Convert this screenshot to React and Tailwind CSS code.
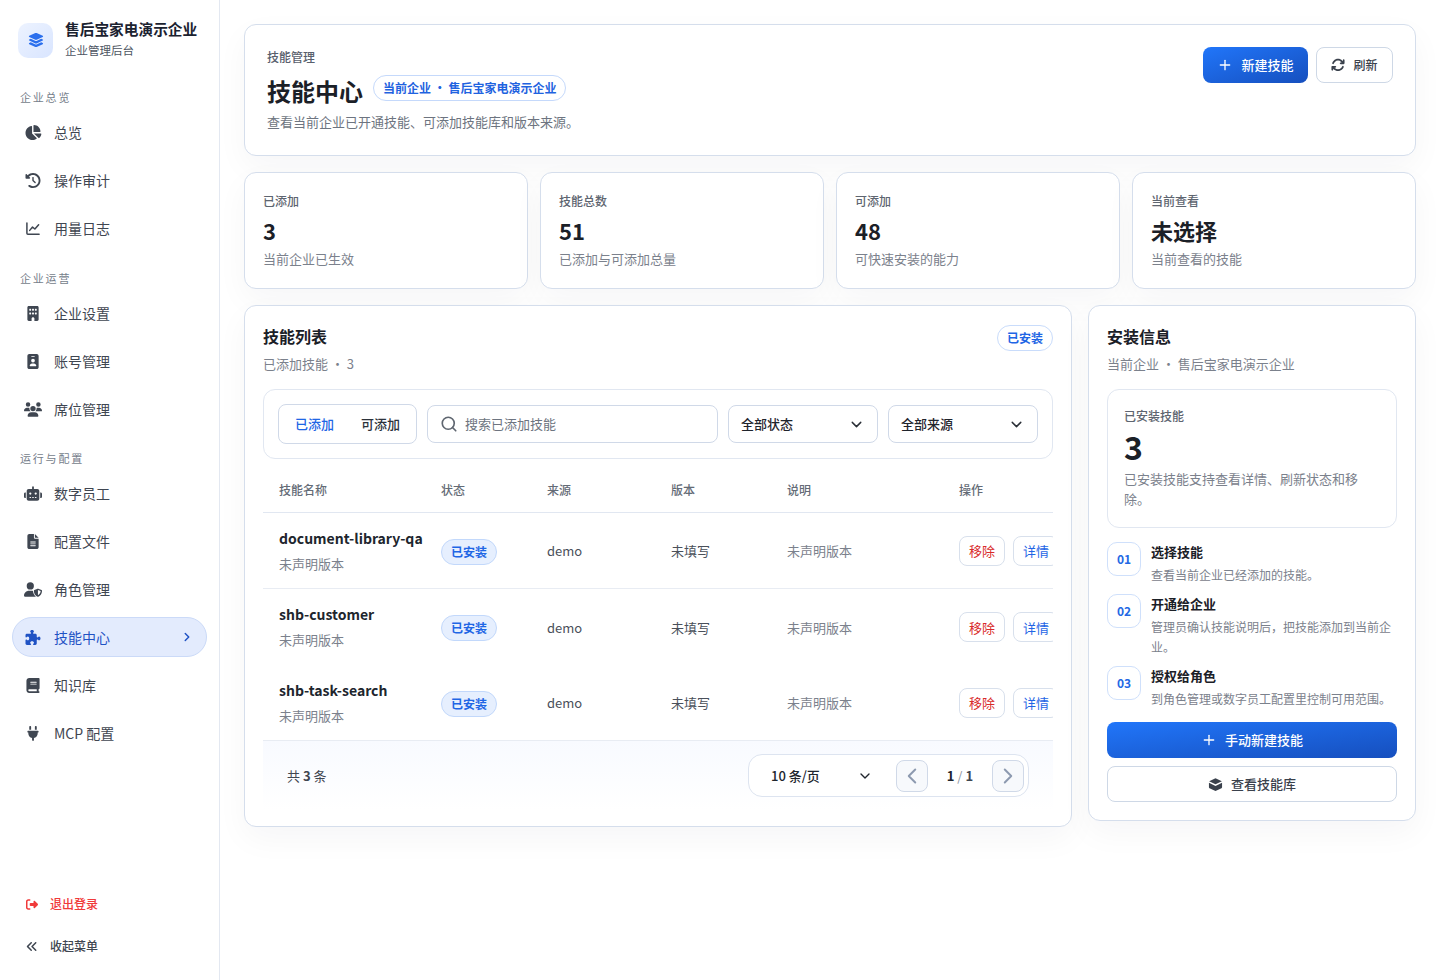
import React from 'react';
import {
  FaChartPie, FaClockRotateLeft, FaBuilding, FaIdBadge, FaUsers, FaRobot, FaFileLines, FaUserShield,
  FaPuzzlePiece, FaBook, FaPlug, FaRightFromBracket, FaAnglesLeft, FaLayerGroup, FaArrowsRotate,
} from 'react-icons/fa6';
import { ChevronDown, ChevronLeft, ChevronRight, Plus, Search } from 'lucide-react';

const ChartIcon = ({ className }) => (
  <svg viewBox="0 0 16 16" className={className} fill="none" stroke="currentColor" strokeWidth="1.6" strokeLinecap="round" strokeLinejoin="round">
    <path d="M1.5 2v11a1 1 0 0 0 1 1h12" />
    <path d="M4.5 10l3-3.5 2.5 2L14 4" />
  </svg>
);

const BoxIcon = ({ className }) => (
  <svg viewBox="0 0 16 16" className={className} fill="currentColor">
    <path d="M8 1.2l6.8 3.2L8 7.8 1.2 4.4z" />
    <path d="M1 6.2l7 3.4 7-3.4V11a1 1 0 0 1-.6.9L8 15l-6.4-3.1A1 1 0 0 1 1 11z" />
  </svg>
);

const nav = [
  { title: '企业总览', cls: 'mt-[10px]', items: [
    { label: '总览', icon: FaChartPie },
    { label: '操作审计', icon: FaClockRotateLeft },
    { label: '用量日志', icon: ChartIcon },
  ] },
  { title: '企业运营', cls: 'mt-[22px]', items: [
    { label: '企业设置', icon: FaBuilding },
    { label: '账号管理', icon: FaIdBadge },
    { label: '席位管理', icon: FaUsers },
  ] },
  { title: '运行与配置', cls: 'mt-[21px]', items: [
    { label: '数字员工', icon: FaRobot },
    { label: '配置文件', icon: FaFileLines },
    { label: '角色管理', icon: FaUserShield },
    { label: '技能中心', icon: FaPuzzlePiece, active: true },
    { label: '知识库', icon: FaBook },
    { label: 'MCP 配置', icon: FaPlug },
  ] },
];

const stats = [
  { label: '已添加', value: '3', sub: '当前企业已生效' },
  { label: '技能总数', value: '51', sub: '已添加与可添加总量' },
  { label: '可添加', value: '48', sub: '可快速安装的能力' },
  { label: '当前查看', value: '未选择', sub: '当前查看的技能' },
];

const skills = ['document-library-qa', 'shb-customer', 'shb-task-search'];

const steps = [
  { no: '01', title: '选择技能', desc: '查看当前企业已经添加的技能。' },
  { no: '02', title: '开通给企业', desc: '管理员确认技能说明后，把技能添加到当前企业。' },
  { no: '03', title: '授权给角色', desc: '到角色管理或数字员工配置里控制可用范围。' },
];

const card = 'rounded-xl border border-[#d5deec] bg-white shadow-[0_12px_32px_rgba(15,23,42,0.04)]';

const Sidebar = () => (
  <aside className="flex h-[980px] w-[220px] shrink-0 flex-col border-r border-[#e3e8f1] bg-white">
    <div className="flex h-[79px] items-center gap-3 pl-[18px] pt-[1px]">
      <div className="flex h-[35px] w-[35px] items-center justify-center rounded-[10px] bg-gradient-to-br from-[#edf3ff] to-[#d9e5ff]">
        <FaLayerGroup className="text-[16px] text-[#2b6fed]" />
      </div>
      <div>
        <div className="-mt-[1px] text-[14.7px] leading-[20px] font-bold text-[#1b2230]">售后宝家电演示企业</div>
        <div className="mt-[1px] text-[11.5px] leading-[20px] text-[#4d5562]">企业管理后台</div>
      </div>
    </div>
    <nav className="px-3">
      {nav.map((group) => (
        <div key={group.title} className={group.cls}>
          <div className="mb-[7px] h-[16px] pl-2 text-[11px] leading-[16px] tracking-[1.8px] text-[#757d8a]">{group.title}</div>
          <div className="flex flex-col gap-2">
            {group.items.map((item) => (
              <a
                key={item.label}
                className={
                  item.active
                    ? 'flex h-10 items-center rounded-[20px] border border-[#cbdaf8] bg-[#e3ebfd] pr-3 pl-3 text-[14px] text-[#1f52c4]'
                    : 'flex h-10 items-center rounded-[20px] border border-transparent pr-3 pl-3 text-[14px] text-[#3f4651]'
                }
              >
                <item.icon className="-ml-px h-[15px] w-[18px] shrink-0" />
                <span className="ml-3">{item.label}</span>
                {item.active && <ChevronRight size={14} strokeWidth={2.5} className="ml-auto" />}
              </a>
            ))}
          </div>
        </div>
      ))}
    </nav>
    <div className="mt-auto flex flex-col gap-2 px-3 pb-[17px]">
      <a className="flex h-[34px] items-center pl-[14px] text-[12px] font-medium text-[#f03a3a]">
        <FaRightFromBracket className="w-3 text-[13px]" />
        <span className="ml-3">退出登录</span>
      </a>
      <a className="flex h-[34px] items-center pl-[14px] text-[12px] font-medium text-[#3f4651]">
        <FaAnglesLeft className="w-3 text-[13px]" />
        <span className="ml-3">收起菜单</span>
      </a>
    </div>
  </aside>
);

const Hero = () => (
  <section className={`${card} flex h-[132px] items-start justify-between p-[22px]`}>
    <div>
      <div className="text-[12px] leading-[20px] font-medium text-[#59606c]">技能管理</div>
      <div className="mt-[6px] flex items-center gap-[10px]">
        <h1 className="text-[24px] leading-[36px] font-bold text-[#1b2027]">技能中心</h1>
        <span className="mb-[7px] flex h-[26px] items-center rounded-full border border-[#c5d9fb] px-[9px] text-[12px] font-semibold text-[#1f63e0]">当前企业 · 售后宝家电演示企业</span>
      </div>
      <p className="mt-[3px] text-[13px] leading-[20px] text-[#6d7480]">查看当前企业已开通技能、可添加技能库和版本来源。</p>
    </div>
    <div className="flex gap-2">
      <button className="flex h-9 w-[105px] items-center justify-center gap-[8px] rounded-lg bg-gradient-to-br from-[#2176fa] to-[#164fbe] text-[13px] font-medium text-white">
        <Plus size={16} strokeWidth={2} />新建技能
      </button>
      <button className="flex h-9 w-[77px] items-center justify-center gap-2 rounded-lg border border-[#ced8e6] bg-white text-[12px] font-medium text-[#3a414c]">
        <FaArrowsRotate className="text-[14px]" />刷新
      </button>
    </div>
  </section>
);

const Stats = () => (
  <section className="mt-4 grid grid-cols-4 gap-3">
    {stats.map((s) => (
      <div key={s.label} className={`${card} h-[117px] px-[18px] pt-[18px]`}>
        <div className="text-[12px] leading-[20px] font-medium text-[#5e6570]">{s.label}</div>
        <div className="mt-[2px] text-[22px] leading-[34px] font-bold text-[#1b2027]">{s.value}</div>
        <div className="mt-[2px] text-[13px] leading-[20px] text-[#7b818c]">{s.sub}</div>
      </div>
    ))}
  </section>
);

const Select = ({ children }) => (
  <div className="flex h-[38px] w-[150px] items-center justify-between rounded-lg border border-[#d0d9e8] pr-[12px] pl-3 text-[13px] font-medium text-[#1f242c]">
    {children}
    <ChevronDown size={17} strokeWidth={2} className="text-[#2a2f37]" />
  </div>
);

const Toolbar = () => (
  <div className="mt-[14px] flex h-[70px] items-center gap-[10px] rounded-xl border border-[#e1e7f1] px-[14px]">
    <div className="flex h-10 w-[139px] items-center justify-between rounded-lg border border-[#d0d9e8] px-4 text-[13px] font-medium">
      <span className="text-[#1f66e5]">已添加</span>
      <span className="text-[#2c323b]">可添加</span>
    </div>
    <div className="flex h-[38px] flex-1 items-center rounded-lg border border-[#d0d9e8] pl-3 text-[13px] text-[#6d7480]">
      <Search size={18} strokeWidth={2.2} className="text-[#5f6670]" />
      <span className="ml-[7px]">搜索已添加技能</span>
    </div>
    <Select>全部状态</Select>
    <Select>全部来源</Select>
  </div>
);

const SkillTable = () => (
  <div className="mt-[10px] overflow-hidden">
    <table className="w-[820px] table-fixed border-collapse text-left">
      <colgroup>
        <col className="w-[178px]" />
        <col className="w-[106px]" />
        <col className="w-[124px]" />
        <col className="w-[116px]" />
        <col className="w-[172px]" />
        <col />
      </colgroup>
      <thead>
        <tr className="h-[43px] border-b border-[#e1e7f1] text-[12px] text-[#646b76]">
          <th className="pl-4 font-medium">技能名称</th>
          <th className="font-medium">状态</th>
          <th className="font-medium">来源</th>
          <th className="font-medium">版本</th>
          <th className="font-medium">说明</th>
          <th className="font-medium">操作</th>
        </tr>
      </thead>
      <tbody>
        {skills.map((name, i) => (
          <tr key={name} className={i === 0 ? 'h-[76px] border-b border-[#e8ecf3]' : 'h-[76px]'}>
            <td className="pt-[2px] pl-4">
              <div className="-mt-[1px] text-[14px] leading-[22px] font-semibold text-[#20252d]">{name}</div>
              <div className="mt-[5px] text-[13px] leading-[20px] text-[#7b818c]">未声明版本</div>
            </td>
            <td className="pt-[2px]">
              <span className="inline-flex h-[26px] w-[56px] items-center justify-center rounded-full border border-[#c2d8fb] bg-[#e6effe] text-[12px] font-semibold text-[#1f66e5]">已安装</span>
            </td>
            <td className="pt-[2px] text-[13px] text-[#4a505a]">demo</td>
            <td className="pt-[2px] text-[13px] text-[#4a505a]">未填写</td>
            <td className="pt-[2px] text-[13px] text-[#7b818c]">未声明版本</td>
            <td className="pt-[2px]">
              <div className="flex gap-2">
                <button className="h-[30px] w-[46px] rounded-lg border border-[#d8e0ec] text-[13px] text-[#d92b2b]">移除</button>
                <button className="h-[30px] w-[46px] rounded-lg border border-[#d8e0ec] text-[13px] text-[#1f66e5]">详情</button>
              </div>
            </td>
          </tr>
        ))}
      </tbody>
    </table>
  </div>
);

const Pager = () => (
  <div className="flex h-[70px] items-center justify-between border-t border-[#e8ecf3] bg-gradient-to-b from-[#f8faff] to-white px-6">
    <div className="text-[13px] text-[#3f4651]">共 <b className="font-semibold">3</b> 条</div>
    <div className="flex h-[43px] w-[281px] items-center rounded-[14px] border border-[#dde4f0] bg-white pr-[4px] pl-[22px]">
      <span className="text-[13px] font-medium text-[#20252d]">10 条/页</span>
      <ChevronDown size={16} strokeWidth={2} className="ml-[37px] text-[#20252d]" />
      <button className="ml-[23px] flex h-8 w-8 items-center justify-center rounded-lg border border-[#d0d9e8] bg-[#f7f9fc] text-[#8d9ab0]">
        <ChevronLeft size={26} strokeWidth={1.8} />
      </button>
      <span className="mx-auto text-[13px] font-semibold text-[#20252d]">1 <span className="font-normal text-[#8d94a0]">/</span> <span className="text-[#3f4651]">1</span></span>
      <button className="flex h-8 w-8 items-center justify-center rounded-lg border border-[#d0d9e8] bg-[#f7f9fc] text-[#8d9ab0]">
        <ChevronRight size={26} strokeWidth={1.8} />
      </button>
    </div>
  </div>
);

const ListCard = () => (
  <section className={`${card} h-[522px] min-w-0 flex-1 px-[18px] pt-[17px]`}>
    <div className="flex items-start justify-between">
      <div>
        <h2 className="text-[16px] leading-[26px] font-semibold text-[#1b2027]">技能列表</h2>
        <p className="mt-[4px] text-[13px] leading-[22px] text-[#7b818c]">已添加技能 · 3</p>
      </div>
      <span className="mt-[2px] flex h-[26px] w-[56px] items-center justify-center rounded-full border border-[#c9dcfb] text-[12px] font-semibold text-[#1f66e5]">已安装</span>
    </div>
    <Toolbar />
    <SkillTable />
    <Pager />
  </section>
);

const InfoCard = () => (
  <aside className={`${card} h-[516px] w-[328px] shrink-0 px-[18px] pt-[17px]`}>
    <h2 className="text-[16px] leading-[26px] font-semibold text-[#1b2027]">安装信息</h2>
    <p className="mt-[4px] text-[13px] leading-[22px] text-[#7b818c]">当前企业 · 售后宝家电演示企业</p>
    <div className="mt-[14px] h-[139px] rounded-xl border border-[#e1e7f1] px-4 pt-4">
      <div className="text-[12px] leading-[20px] font-medium text-[#5e6570]">已安装技能</div>
      <div className="text-[32px] leading-[40px] font-bold text-[#1b2027]">3</div>
      <p className="mt-[3px] text-[13px] leading-[20px] text-[#7b818c]">已安装技能支持查看详情、刷新状态和移除。</p>
    </div>
    <div className="mt-[14px] flex flex-col gap-[9.5px]">
      {steps.map((s) => (
        <div key={s.no} className="flex gap-[10px]">
          <div className="flex h-[34px] w-[34px] shrink-0 items-center justify-center rounded-[10px] border border-[#cfe0fb] text-[12px] font-semibold text-[#2468e4]">{s.no}</div>
          <div className="-mt-[1px]">
            <div className="text-[13px] leading-[22px] font-semibold text-[#1b2027]">{s.title}</div>
            <div className="mt-[2px] text-[12px] leading-[19.5px] text-[#7b818c]">{s.desc}</div>
          </div>
        </div>
      ))}
    </div>
    <button className="mt-[14px] flex h-9 w-full items-center justify-center gap-[8px] rounded-lg bg-gradient-to-br from-[#2176fa] to-[#164fbe] text-[13px] font-medium text-white">
      <Plus size={16} strokeWidth={2} />手动新建技能
    </button>
    <button className="mt-2 flex h-9 w-full items-center justify-center gap-2 rounded-lg border border-[#ced8e6] bg-white text-[13px] font-medium text-[#3a414c]">
      <BoxIcon className="h-[15px] w-[15px]" />查看技能库
    </button>
  </aside>
);

const App = () => (
  <div className="flex min-h-[980px] bg-white font-['Noto_Sans_CJK_SC','Noto_Sans',sans-serif]">
    <Sidebar />
    <main className="min-w-0 flex-1 p-6">
      <Hero />
      <Stats />
      <div className="mt-4 flex items-start gap-4">
        <ListCard />
        <InfoCard />
      </div>
    </main>
  </div>
);

export default App;
